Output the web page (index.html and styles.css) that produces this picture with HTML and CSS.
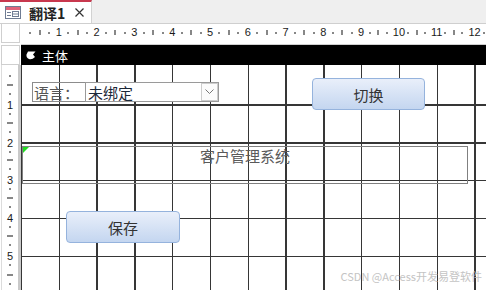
FILE: index.html
```html
<!DOCTYPE html>
<html lang="zh-CN">
<head>
  <meta charset="UTF-8">
  <meta name="viewport" content="width=device-width, initial-scale=1.0">
  <title>翻译1 - 设计视图</title>
  <link rel="stylesheet" href="styles.css">
</head>
<body>
  <div class="window">
    <div class="tabbar">
      <div class="tab">
        <svg class="tab-icon" width="16" height="13" viewBox="0 0 16 13">
          <rect x="0.5" y="0.5" width="15" height="12" fill="#fff" stroke="#6f7c93"/>
          <rect x="1" y="1" width="14" height="3" fill="#e0637a"/>
          <line x1="2" y1="6.5" x2="6" y2="6.5" stroke="#6f7c93"/>
          <line x1="2" y1="9.5" x2="6" y2="9.5" stroke="#6f7c93"/>
          <rect x="7.5" y="5.5" width="6" height="5" fill="none" stroke="#6f7c93"/>
          <line x1="8" y1="8" x2="13" y2="8" stroke="#6f7c93"/>
        </svg>
        <span class="tab-title">翻译1</span>
        <svg class="tab-close" width="9" height="9" viewBox="0 0 9 9">
          <path d="M0.5 0.5 L8.5 8.5 M8.5 0.5 L0.5 8.5" stroke="#333" stroke-width="1.2"/>
        </svg>
      </div>
    </div>

    <div class="designer">
      <div class="corner"></div>
      <div class="hruler">
        <span class="cm"><i class="dot"></i><i class="bar"></i><i class="dot"></i><b class="num">1</b></span>
        <span class="cm"><i class="dot"></i><i class="bar"></i><i class="dot"></i><b class="num">2</b></span>
        <span class="cm"><i class="dot"></i><i class="bar"></i><i class="dot"></i><b class="num">3</b></span>
        <span class="cm"><i class="dot"></i><i class="bar"></i><i class="dot"></i><b class="num">4</b></span>
        <span class="cm"><i class="dot"></i><i class="bar"></i><i class="dot"></i><b class="num">5</b></span>
        <span class="cm"><i class="dot"></i><i class="bar"></i><i class="dot"></i><b class="num">6</b></span>
        <span class="cm"><i class="dot"></i><i class="bar"></i><i class="dot"></i><b class="num">7</b></span>
        <span class="cm"><i class="dot"></i><i class="bar"></i><i class="dot"></i><b class="num">8</b></span>
        <span class="cm"><i class="dot"></i><i class="bar"></i><i class="dot"></i><b class="num">9</b></span>
        <span class="cm"><i class="dot"></i><i class="bar"></i><i class="dot"></i><b class="num">10</b></span>
        <span class="cm"><i class="dot"></i><i class="bar"></i><i class="dot"></i><b class="num">11</b></span>
        <span class="cm"><i class="dot"></i><i class="bar"></i><i class="dot"></i><b class="num">12</b></span>
        <span class="cm"><i class="dot"></i><i class="bar"></i><i class="dot"></i><i></i></span>
      </div>

      <div class="section-corner"></div>
      <div class="section-bar">
        <svg class="section-icon" width="10" height="9" viewBox="0 0 10 9">
          <path d="M2 0.5 H9.5 L7 3.5 L9 6 Q6 9 3 8 Q0 6.5 0.5 3.5 Z" fill="#fff"/>
        </svg>
        <span>主体</span>
      </div>

      <div class="vruler">
        <span class="vcm"><i class="dot"></i><i class="bar"></i><i class="dot"></i><b class="num">1</b></span>
        <span class="vcm"><i class="dot"></i><i class="bar"></i><i class="dot"></i><b class="num">2</b></span>
        <span class="vcm"><i class="dot"></i><i class="bar"></i><i class="dot"></i><b class="num">3</b></span>
        <span class="vcm"><i class="dot"></i><i class="bar"></i><i class="dot"></i><b class="num">4</b></span>
        <span class="vcm"><i class="dot"></i><i class="bar"></i><i class="dot"></i><b class="num">5</b></span>
        <span class="vcm"><i class="dot"></i><i class="bar"></i><i class="dot"></i><i></i></span>
      </div>

      <div class="detail">
        <div class="ctl label lang-label">语言：</div>
        <div class="ctl combo lang-combo">
          <span class="combo-text">未绑定</span>
          <span class="combo-arrow">
            <svg width="9" height="6" viewBox="0 0 9 6"><path d="M0.5 0.5 L4.5 4.5 L8.5 0.5" fill="none" stroke="#777"/></svg>
          </span>
        </div>
        <div class="ctl button switch-btn">切换</div>
        <div class="ctl textbox title-box">
          <i class="corner-mark"></i>
          客户管理系统
        </div>
        <div class="ctl button save-btn">保存</div>
      </div>
    </div>

    <div class="watermark">CSDN @Access开发易登软件</div>
  </div>
</body>
</html>
```

FILE: styles.css
```css
* {
  box-sizing: border-box;
  margin: 0;
  padding: 0;
}

body {
  font-family: "Noto Sans CJK SC", "Noto Sans", sans-serif;
  background: #fff;
  color: #333;
}

.window {
  position: relative;
  width: 486px;
  height: 290px;
  overflow: hidden;
  background: #fff;
}

/* onglet du document */
.tabbar {
  height: 24px;
  background: #efefef;
  border-bottom: 1px solid #cfcfcf;
  display: flex;
}

.tab {
  width: 92px;
  height: 23px;
  background: #fff;
  border-top: 2px solid #c8384e;
  border-right: 1px solid #d2d2d2;
  display: flex;
  align-items: center;
  padding-left: 5px;
}

.tab-title {
  margin-left: 8px;
  font-size: 14px;
  font-weight: bold;
  color: #222;
  line-height: 1;
}

.tab-close {
  margin-left: 10px;
}

/* zone de conception */
.designer {
  display: grid;
  grid-template-columns: 21px 465px;
  grid-template-rows: 21px 20px 225px;
}

.corner {
  margin: 0 1px 2px 1px;
  border: 1px solid #cfcfcf;
  border-top: none;
  background: #fff;
}

.hruler {
  display: flex;
  background: #fff;
  border-bottom: 1px solid #cfcfcf;
  padding-bottom: 3px;
  overflow: hidden;
  font-family: "Liberation Sans", sans-serif;
}

.cm {
  flex: none;
  width: 37.8px;
  display: grid;
  grid-template-columns: repeat(4, 1fr);
  align-items: center;
}

.cm > * {
  justify-self: end;
  transform: translateX(50%);
}

.cm .dot {
  width: 1px;
  height: 2px;
  background: #111;
}

.cm .bar {
  width: 1px;
  height: 5px;
  background: #111;
}

.num {
  font-weight: normal;
  font-size: 11px;
  line-height: 11px;
  color: #1a1a1a;
}

.section-corner {
  margin: 0 1px;
  border: 1px solid #cfcfcf;
  background: #fff;
}

.section-bar {
  background: #000;
  color: #fff;
  display: flex;
  align-items: center;
  padding-left: 5px;
  gap: 6px;
  font-size: 13px;
  line-height: 1;
}

.vruler {
  margin-left: 1px;
  border-left: 1px solid #dcdcdc;
  border-right: 3px solid #c9c9c9;
  background: #fff;
  padding-top: 2px;
  display: flex;
  flex-direction: column;
  overflow: hidden;
  font-family: "Liberation Sans", sans-serif;
}

.vcm {
  flex: none;
  height: 37.8px;
  display: grid;
  grid-template-rows: repeat(4, 1fr);
  justify-items: center;
}

.vcm > * {
  align-self: end;
  transform: translateY(50%);
}

.vcm .dot {
  width: 2px;
  height: 1px;
  background: #111;
}

.vcm .bar {
  width: 6px;
  height: 1px;
  background: #111;
}

/* section détail avec la grille */
.detail {
  position: relative;
  background-color: #fff;
  background-image:
    repeating-linear-gradient(to right, #363636 0, #363636 1.2px, transparent 1.2px, transparent 37.5px, #363636 37.5px, #363636 37.8px),
    linear-gradient(to bottom, #fff 0, #fff 3px, transparent 3px),
    repeating-linear-gradient(to bottom, transparent 0, transparent 1.5px, #363636 1.5px, #363636 2.9px, transparent 2.9px, transparent 37.8px);
}

.ctl {
  position: absolute;
  font-size: 15px;
  line-height: 1;
}

.label {
  border: 1px solid #8c8c8c;
  color: #555;
  display: flex;
  align-items: center;
  padding-left: 1px;
}

.lang-label {
  left: 11px;
  top: 17px;
  width: 54px;
  height: 20px;
}

.combo {
  background: #fff;
  border: 1px solid #9a9a9a;
  display: flex;
  align-items: center;
  padding-left: 2px;
  color: #1c2838;
}

.lang-combo {
  left: 64px;
  top: 17px;
  width: 134px;
  height: 20px;
}

.combo-arrow {
  margin-left: auto;
  width: 17px;
  height: 18px;
  border: 1px solid #cdcdcd;
  background: #fcfcfc;
  display: flex;
  align-items: center;
  justify-content: center;
}

.button {
  display: flex;
  align-items: center;
  justify-content: center;
  border: 1px solid #95b3dd;
  border-radius: 4px;
  background: linear-gradient(to bottom, #e9effa, #c4d6f0);
  color: #333;
}

.switch-btn {
  left: 291px;
  top: 13px;
  width: 113px;
  height: 32px;
}

.save-btn {
  left: 45px;
  top: 146px;
  width: 114px;
  height: 32px;
}

.textbox {
  border: 1px solid #808080;
  color: #5a5a5a;
  text-align: center;
  padding-top: 1px;
}

.title-box {
  left: 1px;
  top: 81px;
  width: 446px;
  height: 38px;
}

.corner-mark {
  position: absolute;
  left: 0;
  top: 0;
  width: 0;
  height: 0;
  border-top: 6px solid #22dd22;
  border-right: 6px solid transparent;
}

.watermark {
  position: absolute;
  right: 4px;
  bottom: 8px;
  font-size: 11px;
  color: #c4c4c4;
  line-height: 1;
}
```
